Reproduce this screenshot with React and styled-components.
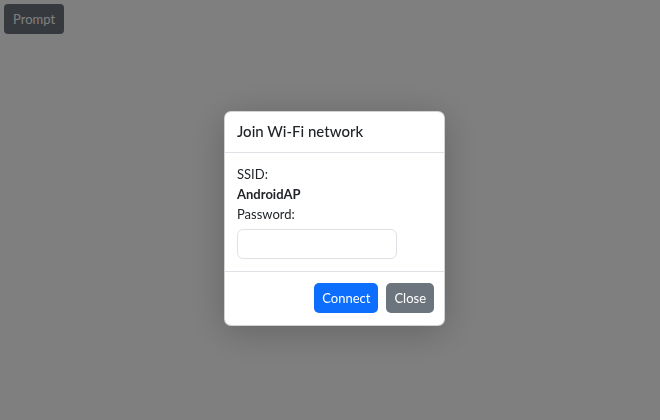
import React from "react";
import styled, { createGlobalStyle } from "styled-components";

const Global = createGlobalStyle`
  html, body { margin: 0; padding: 0; background: #fff; }
  body {
    font-family: "Lato", "Open Sans", sans-serif;
    font-size: 13px;
    line-height: 20px;
    color: #212529;
    width: 660px;
    height: 420px;
    overflow: hidden;
  }
`;

const Page = styled.div`
  padding: 4px;
`;

const Button = styled.button`
  font-family: inherit;
  font-size: 13px;
  line-height: 20px;
  height: ${(p) => p.$h || 29}px;
  border: 1px solid transparent;
  border-radius: ${(p) => p.$r || 5}px;
  padding: 0 ${(p) => p.$px || 7}px;
  color: #fff;
  background: ${(p) => p.$bg};
  cursor: pointer;
`;

const Backdrop = styled.div`
  position: fixed;
  inset: 0;
  background: rgba(0, 0, 0, 0.5);
`;

const Modal = styled.div`
  position: fixed;
  left: 224px;
  top: 111px;
  width: 221px;
  box-sizing: border-box;
  background: #fff;
  border: 1px solid rgba(0, 0, 0, 0.175);
  border-radius: 7px;
  box-shadow: 0 6px 36px rgba(0, 0, 0, 0.22);
  display: flex;
  flex-direction: column;
`;

const Header = styled.div`
  padding: 9px 12px 10px;
  border-bottom: 1px solid #dee2e6;
`;

const Title = styled.h5`
  margin: 0;
  font-size: 15px;
  font-weight: 500;
  line-height: 21px;
`;

const Body = styled.div`
  padding: 11px 12px 12px;
  display: flex;
  flex-direction: column;
  align-items: flex-start;
`;

const Line = styled.div`
  font-weight: ${(p) => (p.$bold ? 700 : 400)};
  line-height: 20px;
`;

const Input = styled.input`
  width: 160px;
  height: 30px;
  box-sizing: border-box;
  margin-top: 5px;
  border: 1px solid #dee2e6;
  border-radius: 6px;
  padding: 3px 8px;
  font-family: inherit;
  font-size: 13px;
  outline: none;
`;

const Footer = styled.div`
  border-top: 1px solid #dee2e6;
  padding: 11px 10px 12px;
  display: flex;
  justify-content: flex-end;
  gap: 8px;
`;

export default function App() {
  return (
    <>
      <Global />
      <Page>
        <Button $bg="#6c757d" $h={30} $r={4} $px={8}>Prompt</Button>
      </Page>
      <Backdrop />
      <Modal>
        <Header>
          <Title>Join Wi-Fi network</Title>
        </Header>
        <Body>
          <Line>SSID:</Line>
          <Line $bold>AndroidAP</Line>
          <Line>Password:</Line>
          <Input type="password" />
        </Body>
        <Footer>
          <Button $bg="#0d6efd" $h={30}>Connect</Button>
          <Button $bg="#6c757d" $h={30}>Close</Button>
        </Footer>
      </Modal>
    </>
  );
}
